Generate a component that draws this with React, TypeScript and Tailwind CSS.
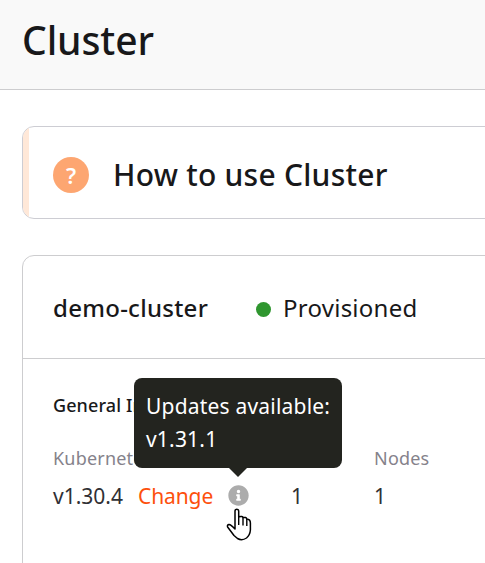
import React from "react";

function InfoIcon() {
  return (
    <svg viewBox="0 0 512 512" className="block size-[21px]">
      <path
        fill="#acacac"
        d="M256 8C119 8 8 119 8 256s111 248 248 248 248-111 248-248S393 8 256 8zm0 110a42 42 0 1 1 0 84 42 42 0 0 1 0-84zm56 254c0 7-5 12-12 12h-88c-7 0-12-5-12-12v-24c0-7 5-12 12-12h12v-64h-12c-7 0-12-5-12-12v-24c0-7 5-12 12-12h64c7 0 12 5 12 12v100h12c7 0 12 5 12 12z"
      />
    </svg>
  );
}

function HandCursor() {
  return (
    <svg viewBox="0 0 26 34" className="absolute left-[226px] top-[508px] h-[34px] w-[26px]">
      <path
        fill="#fff"
        stroke="#000"
        strokeWidth="1.5"
        strokeLinejoin="round"
        d="M9 21V3.2Q9 1.2 10.8 1.2T12.7 3.2V8.8Q16.8 7.8 17 9.6Q20.3 8.8 20.8 11Q24.4 11.2 24.4 15V22Q24 27 20.5 30Q16 33 11.5 30.5L8 27.5L1.6 19Q.8 16.8 3 16.6Q5 16.8 9 21Z"
      />
      <path fill="none" stroke="#000" strokeWidth="1.4" d="M12.7 8.5V17M17 9.5V17.5M20.8 11V18" />
    </svg>
  );
}

function Tooltip() {
  return (
    <div className="absolute left-[134px] top-[378px] h-[90px] w-[208px] whitespace-nowrap rounded-lg bg-[#23241f] px-3 pt-3 text-[21px] leading-[33px] text-white">
      <div><span className="tracking-[0.2px]">Updates available:</span></div>
      <div><span className="tracking-[0.2px]">v1.31.1</span></div>
      <svg viewBox="0 0 18 9" className="absolute left-[95px] top-[90px] h-[9px] w-[18px]">
        <path fill="#23241f" d="M0 0H18L9 9Z" />
      </svg>
    </div>
  );
}

export default function App() {
  return (
    <div className="relative h-[563px] w-[485px] overflow-hidden whitespace-nowrap bg-white font-['Noto_Sans',sans-serif] text-[#18181a]">
      <header className="flex h-[90px] items-center border-b border-[#cdcdcf] bg-[#f9f9f9] pb-[11px] pl-[22px]">
        <h1 className="text-[39px] font-medium leading-none tracking-[-0.1px]">Cluster</h1>
      </header>
      <main className="pl-[22px] pt-9">
        <section className="flex h-[93px] w-[520px] items-center overflow-hidden rounded-xl border border-[#cdcdd3]">
          <div className="h-full w-1.5 bg-[#ffe8d8]" />
          <div className="ml-6 mt-[5px] flex size-9 items-center justify-center rounded-full bg-[#fda671] text-[22px] font-semibold leading-none text-white">
            ?
          </div>
          <h2 className="ml-6 mt-[5px] text-[30px] font-medium leading-none tracking-[0.25px]">How to use Cluster</h2>
        </section>
        <section className="mt-9 h-[340px] w-[520px] rounded-xl border border-[#cdcdcf]">
          <div className="flex h-[103px] items-center border-b border-[#cdcdcf] pl-[30px] pt-[3px]">
            <h3 className="-mt-[2px] w-[203px] text-[24px] font-medium leading-none tracking-[0.27px]">demo-cluster</h3>
            <span className="mt-[2px] size-[15px] rounded-full bg-[#2f962f]" />
            <span className="-mt-[2px] ml-3 text-[24px] leading-none tracking-[0.25px]">Provisioned</span>
          </div>
          <div className="pl-[30px] pt-[34px]">
            <h4 className="text-[18px] font-medium leading-6 tracking-[0.1px]">General Information</h4>
            <div className="mt-[29px] flex text-[18px] leading-6 tracking-[0.2px] text-[#85828b]">
              <span className="w-[321px]">Kubernetes version</span>
              <span>Nodes</span>
            </div>
            <div className="mt-[13px] flex h-7 items-center text-[21px] text-[#303034]">
              <span className="w-[85px]">v1.30.4</span>
              <a className="w-[90px] tracking-[-0.1px] text-[#fd500d]">Change</a>
              <span className="-mt-[3px] w-[63px]"><InfoIcon /></span>
              <span className="w-[83px]">1</span>
              <span>1</span>
            </div>
          </div>
        </section>
      </main>
      <Tooltip />
      <HandCursor />
    </div>
  );
}
